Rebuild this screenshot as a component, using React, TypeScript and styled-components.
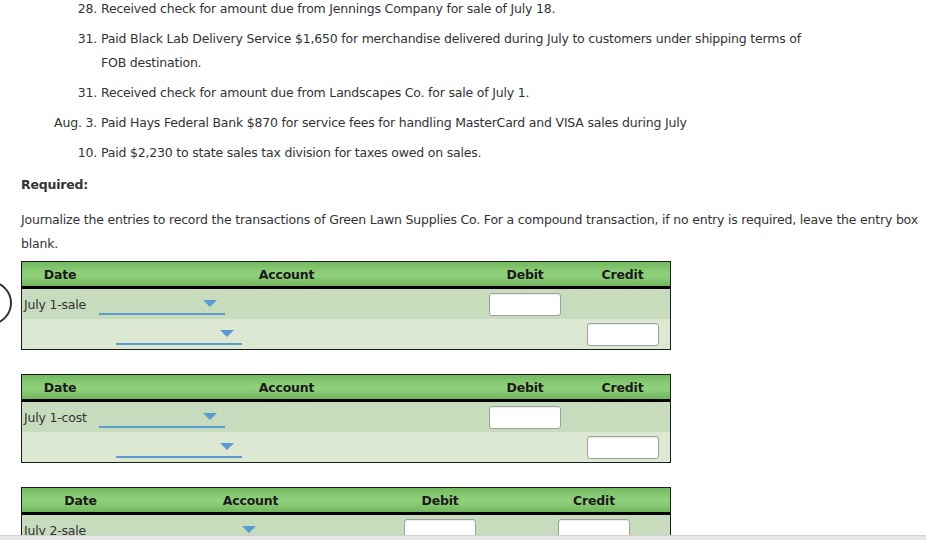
import React from 'react';
import styled, { createGlobalStyle } from 'styled-components';

const GlobalStyle = createGlobalStyle`
  html, body {
    margin: 0;
    padding: 0;
    background: #fff;
    overflow: hidden;
  }
  body {
    font-family: "DejaVu Sans", Verdana, sans-serif;
    font-size: 12.5px;
    letter-spacing: -0.2px;
    color: #333;
  }
`;

interface Transaction {
  num: string;
  text: string;
}

const transactions: Transaction[] = [
  { num: '28.', text: 'Received check for amount due from Jennings Company for sale of July 18.' },
  { num: '31.', text: 'Paid Black Lab Delivery Service $1,650 for merchandise delivered during July to customers under shipping terms of FOB destination.' },
  { num: '31.', text: 'Received check for amount due from Landscapes Co. for sale of July 1.' },
  { num: 'Aug. 3.', text: 'Paid Hays Federal Bank $870 for service fees for handling MasterCard and VISA sales during July' },
  { num: '10.', text: 'Paid $2,230 to state sales tax division for taxes owed on sales.' },
];

interface Cols {
  date: number;
  account: number;
  debit: number;
  credit: number;
  shift: number;
}

const wideCols: Cols = { date: 76, account: 377, debit: 100, credit: 95, shift: 1 };
const evenCols: Cols = { date: 117, account: 223, debit: 156, credit: 152, shift: -1 };

interface Entry {
  label: string;
  cols: Cols;
  creditOnFirst: boolean;
  focused?: boolean;
}

const entries: Entry[] = [
  { label: 'July 1-sale', cols: wideCols, creditOnFirst: false, focused: true },
  { label: 'July 1-cost', cols: wideCols, creditOnFirst: false },
  { label: 'July 2-sale', cols: evenCols, creditOnFirst: true },
];

export default function App() {
  return (
    <>
      <GlobalStyle />
      <Page>
        <List>
          {transactions.map((t, i) => (
            <Item key={i}>
              <Num>{t.num}</Num>
              <ItemText>{t.text}</ItemText>
            </Item>
          ))}
        </List>

        <Heading>Required:</Heading>
        <Instructions>
          Journalize the entries to record the transactions of Green Lawn Supplies Co. For a compound transaction, if no entry is required, leave the entry box blank.
        </Instructions>

        <Tables>
          {entries.map((e, i) => (
            <Journal key={i} entry={e} />
          ))}
        </Tables>
      </Page>
      <BottomBar />
    </>
  );
}

const Journal: React.FC<{ entry: Entry }> = ({ entry }) => {
  const { cols } = entry;
  const grid = `${cols.date}px ${cols.account}px ${cols.debit}px ${cols.credit}px`;

  return (
    <TableWrap>
      {entry.focused && <FocusRing />}
      <Table>
        <Header $grid={grid}>
          <HeadCell>Date</HeadCell>
          <HeadCell>Account</HeadCell>
          <HeadCell>Debit</HeadCell>
          <HeadCell>Credit</HeadCell>
        </Header>
        {[0, 1].map(r => (
          <Row key={r} $grid={grid} $alt={r === 1}>
            <DateCell>{r === 0 ? entry.label : ''}</DateCell>
            <AccountCell $shift={cols.shift}>
              <Dropdown $indent={r === 0 ? 0 : 17}>
                <Arrow />
              </Dropdown>
            </AccountCell>
            <AmountCell>{r === 0 && <AmountInput />}</AmountCell>
            <AmountCell>{(r === 1 || entry.creditOnFirst) && <AmountInput />}</AmountCell>
          </Row>
        ))}
      </Table>
    </TableWrap>
  );
};

const Page = styled.div`
  padding: 0 6px 0 21px;
`;

const List = styled.div`
  margin-top: -3px;
  display: flex;
  flex-direction: column;
  gap: 6px;
`;

const Item = styled.div`
  display: flex;
  line-height: 24px;
`;

const Num = styled.span`
  flex: 0 0 76px;
  text-align: right;
  padding-right: 4px;
`;

const ItemText = styled.span`
  max-width: 705px;
`;

const Heading = styled.div`
  margin-top: 8px;
  line-height: 24px;
  font-weight: bold;
`;

const Instructions = styled.p`
  margin: 11px 0 0;
  line-height: 24px;
`;

const Tables = styled.div`
  margin-top: 5px;
  display: flex;
  flex-direction: column;
  gap: 24px;
`;

const TableWrap = styled.div`
  position: relative;
  width: 650px;
`;

const FocusRing = styled.div`
  position: absolute;
  left: -53px;
  top: 20px;
  width: 40px;
  height: 40px;
  border: 2px solid #333;
  border-radius: 50%;
`;

const Table = styled.div`
  border: 1px solid #1e1e1e;
`;

const Header = styled.div<{ $grid: string }>`
  display: grid;
  grid-template-columns: ${p => p.$grid};
  height: 24px;
  background: linear-gradient(#72b95f, #8fcf7a 45%, #8fcf7a 60%, #70b65d);
  border-bottom: 3px solid #000;
`;

const HeadCell = styled.div`
  display: flex;
  align-items: center;
  justify-content: center;
  font-weight: bold;
  color: #1a1a1a;
`;

const Row = styled.div<{ $grid: string; $alt: boolean }>`
  display: grid;
  grid-template-columns: ${p => p.$grid};
  height: 30px;
  background: ${p => (p.$alt ? '#dde8d3' : '#c6dcbd')};
`;

const DateCell = styled.div`
  display: flex;
  align-items: center;
  padding-left: 2px;
  white-space: nowrap;
`;

const AccountCell = styled.div<{ $shift: number }>`
  display: flex;
  align-items: center;
  margin-left: ${p => p.$shift}px;
`;

const Dropdown = styled.div<{ $indent: number }>`
  position: relative;
  margin-left: ${p => p.$indent}px;
  width: 126px;
  height: 20px;
  border-bottom: 2px solid #5a9bd4;
`;

const Arrow = styled.span`
  position: absolute;
  right: 8px;
  top: 7px;
  width: 0;
  height: 0;
  border-left: 7px solid transparent;
  border-right: 7px solid transparent;
  border-top: 7px solid #5a9bd4;
`;

const AmountCell = styled.div`
  display: flex;
  align-items: center;
  justify-content: center;
`;

const AmountInput = styled.div`
  box-sizing: border-box;
  width: 72px;
  height: 23px;
  background: #fff;
  border: 1px solid #a0a0a0;
  border-radius: 3px;
  box-shadow: inset 0 1px 1px rgba(0, 0, 0, 0.08);
`;

const BottomBar = styled.div`
  position: fixed;
  left: 0;
  right: 0;
  bottom: 0;
  height: 4px;
  background: #e6e6e6;
  border-top: 1px solid #d0d0d0;
`;
